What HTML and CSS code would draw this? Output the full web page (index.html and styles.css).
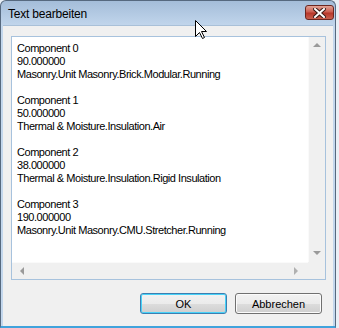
FILE: index.html
```html
<!DOCTYPE html>
<html lang="de">
<head>
    <meta charset="UTF-8">
    <title>Text bearbeiten</title>
    <link rel="stylesheet" href="styles.css">
</head>
<body>
    <div class="window">
        <div class="titlebar">
            <span class="title">Text bearbeiten</span>
            <button class="close" aria-label="Schließen">
                <svg width="13" height="10" viewBox="0 0 13 10">
                    <path d="M2 1 L11 9 M11 1 L2 9" stroke="#3b1a16" stroke-width="4" stroke-linecap="square"/>
                    <path d="M2 1 L11 9 M11 1 L2 9" stroke="#fff" stroke-width="2" stroke-linecap="square"/>
                </svg>
            </button>
        </div>

        <div class="client">
            <div class="textbox">
                <div class="text">Component 0
90.000000
Masonry.Unit Masonry.Brick.Modular.Running

Component 1
50.000000
Thermal &amp; Moisture.Insulation.Air

Component 2
38.000000
Thermal &amp; Moisture.Insulation.Rigid Insulation

Component 3
190.000000
Masonry.Unit Masonry.CMU.Stretcher.Running</div>
                <div class="vscroll">
                    <span class="arrow up"></span>
                    <span class="arrow down"></span>
                </div>
                <div class="hscroll">
                    <span class="arrow left"></span>
                    <span class="arrow right"></span>
                </div>
                <div class="corner"></div>
            </div>

            <div class="buttons">
                <button class="btn default">OK</button>
                <button class="btn">Abbrechen</button>
            </div>
        </div>
    </div>

    <svg class="cursor" width="13" height="20" viewBox="0 0 13 20">
        <path d="M0.5 0.5 L0.5 16.5 L4.5 12.5 L7.5 18.5 L9.5 17.5 L6.5 11.5 L11.5 11.5 Z" fill="#fff" stroke="#000" stroke-width="1"/>
    </svg>
</body>
</html>
```

FILE: styles.css
```css
body {
    margin: 0;
    background: #e9eff6;
    font-family: "Liberation Sans", Arial, sans-serif;
    font-size: 11px;
}
.window {
    width: 336px;
    height: 328px;
    box-sizing: border-box;
    border: 1px solid #56697f;
    border-bottom: 2px solid #41a3dc;
    border-radius: 6px 6px 0 0;
    padding: 0 2px;
    background: linear-gradient(#a4bdd9, #c3d7ed 26px, #c3d7ed);
    display: flex;
    flex-direction: column;
}
.titlebar {
    height: 24px;
    display: flex;
    align-items: flex-start;
    justify-content: space-between;
}
.title {
    font-size: 12px;
    letter-spacing: -0.2px;
    margin: 6px 0 0 5px;
    color: #000;
}
.close {
    width: 29px;
    height: 15px;
    margin: 4px -1px 0 0;
    padding: 0;
    border: 1px solid #6b2620;
    border-radius: 3px;
    background: linear-gradient(#e0a295, #cc5f52 45%, #b8382b 55%, #c8604f);
    display: flex;
    align-items: center;
    justify-content: center;
}
.client {
    flex: 1;
    background: #f0f0f0;
    border-top: 1px solid #a9c0d8;
    padding: 10px 7px 0 8px;
    display: flex;
    flex-direction: column;
}
.textbox {
    height: 242px;
    border: 1px solid #a7c2dd;
    background: #fff;
    display: grid;
    grid-template-columns: 1fr 17px;
    grid-template-rows: 1fr 17px;
}
.text {
    white-space: pre;
    line-height: 13px;
    letter-spacing: -0.45px;
    padding: 5px 0 0 5px;
    color: #000;
    overflow: hidden;
}
.vscroll,
.hscroll,
.corner {
    background: #f0f0f0;
    position: relative;
}
.vscroll {
    border-left: 1px solid #fafafa;
}
.hscroll {
    border-top: 1px solid #fafafa;
}
.arrow {
    position: absolute;
    width: 0;
    height: 0;
}
.arrow.up {
    top: 6px;
    left: 4px;
    border: 4px solid transparent;
    border-top: 0;
    border-bottom: 4px solid #9a9a9a;
}
.arrow.down {
    bottom: 7px;
    left: 4px;
    border: 4px solid transparent;
    border-bottom: 0;
    border-top: 4px solid #9a9a9a;
}
.arrow.left {
    left: 8px;
    top: 4px;
    border: 4px solid transparent;
    border-left: 0;
    border-right: 4px solid #9a9a9a;
}
.arrow.right {
    right: 10px;
    top: 4px;
    border: 4px solid transparent;
    border-right: 0;
    border-left: 4px solid #b0b0b0;
}
.buttons {
    display: flex;
    justify-content: flex-end;
    gap: 8px;
    margin-top: 13px;
    padding-right: 4px;
}
.btn {
    width: 87px;
    height: 21px;
    padding: 0;
    font-family: "Liberation Sans", Arial, sans-serif;
    font-size: 11px;
    color: #000;
    border: 1px solid #707070;
    border-radius: 3px;
    background: linear-gradient(#f2f2f2, #ebebeb 50%, #dddddd 51%, #cfcfcf);
    box-shadow: inset 0 0 0 1px #fbfbfb;
}
.btn.default {
    border-color: #3c7fb1;
    box-shadow: inset 0 0 0 1px #48d2f8;
}
.cursor {
    position: absolute;
    left: 195px;
    top: 20px;
}
```
